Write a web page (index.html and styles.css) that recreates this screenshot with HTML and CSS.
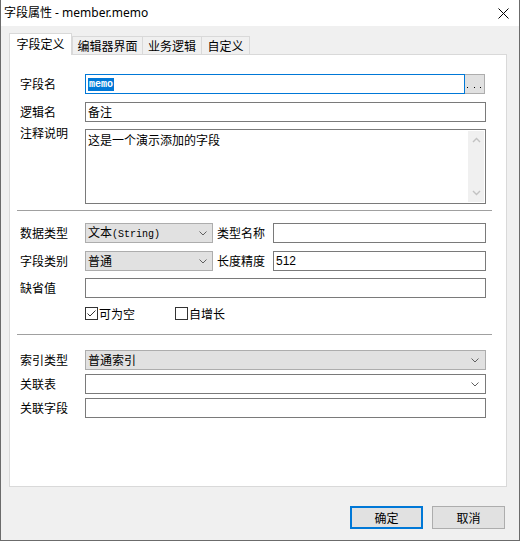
FILE: index.html
```html
<!DOCTYPE html>
<html lang="zh">
<head>
<meta charset="utf-8">
<title>字段属性 - member.memo</title>
<link rel="stylesheet" href="styles.css">
</head>
<body>
<div class="window">
  <div class="titlebar">
    <span class="title">字段属性 - member.memo</span>
    <svg class="close" width="11" height="11" viewBox="0 0 11 11"><path d="M0.5 0.5L10.5 10.5M10.5 0.5L0.5 10.5" stroke="#000" stroke-width="1" fill="none"/></svg>
  </div>
  <div class="main">
    <div class="tabs">
      <div class="tab tab-active tab-1">字段定义</div>
      <div class="tab tab-2">编辑器界面</div>
      <div class="tab tab-3">业务逻辑</div>
      <div class="tab tab-4">自定义</div>
    </div>
    <div class="panel">
      <div class="row">
        <div class="label">字段名</div>
        <div class="field focus"><span class="sel">memo</span></div>
        <div class="dots"><svg width="19" height="20" viewBox="0 0 19 20"><rect x="2" y="12" width="1" height="1" fill="#000"/><rect x="9" y="12" width="1" height="1" fill="#000"/><rect x="15" y="12" width="1" height="1" fill="#000"/></svg></div>
      </div>
      <div class="row gap-8">
        <div class="label">逻辑名</div>
        <div class="field">备注</div>
      </div>
      <div class="row row-top gap-7">
        <div class="label label-top">注释说明</div>
        <div class="field textarea">
          <div class="textarea-text">这是一个演示添加的字段</div>
          <div class="scrollbar">
            <svg width="9" height="6" viewBox="0 0 9 6"><path d="M1 5L4.5 1.5L8 5" fill="none" stroke="#c2c2c2" stroke-width="1.4"/></svg>
            <svg width="9" height="6" viewBox="0 0 9 6"><path d="M1 1L4.5 4.5L8 1" fill="none" stroke="#c2c2c2" stroke-width="1.4"/></svg>
          </div>
        </div>
      </div>
      <div class="sep sep-1"></div>
      <div class="row gap-12">
        <div class="label">数据类型</div>
        <div class="select select-short"><span>文本<span class="mono">(String)</span></span><svg width="8" height="5" viewBox="0 0 8 5"><path d="M0.5 0.5L4 4L7.5 0.5" fill="none" stroke="#606060"/></svg></div>
        <div class="label-mid">类型名称</div>
        <div class="field"></div>
      </div>
      <div class="row gap-8">
        <div class="label">字段类别</div>
        <div class="select select-short"><span>普通</span><svg width="8" height="5" viewBox="0 0 8 5"><path d="M0.5 0.5L4 4L7.5 0.5" fill="none" stroke="#606060"/></svg></div>
        <div class="label-mid">长度精度</div>
        <div class="field"><span class="num">512</span></div>
      </div>
      <div class="row gap-7">
        <div class="label">缺省值</div>
        <div class="field"></div>
      </div>
      <div class="row checks">
        <div class="check check-1">
          <span class="box"><svg width="11" height="11" viewBox="0 0 11 11"><path d="M1.5 5.5L4 8L9.5 2.5" fill="none" stroke="#333" stroke-width="1"/></svg></span>
          <span>可为空</span>
        </div>
        <div class="check">
          <span class="box"></span>
          <span>自增长</span>
        </div>
      </div>
      <div class="sep sep-2"></div>
      <div class="row gap-15">
        <div class="label">索引类型</div>
        <div class="select select-wide"><span>普通索引</span><svg width="8" height="5" viewBox="0 0 8 5"><path d="M0.5 0.5L4 4L7.5 0.5" fill="none" stroke="#606060"/></svg></div>
      </div>
      <div class="row gap-4">
        <div class="label">关联表</div>
        <div class="field combo"><span></span><svg width="8" height="5" viewBox="0 0 8 5"><path d="M0.5 0.5L4 4L7.5 0.5" fill="none" stroke="#606060"/></svg></div>
      </div>
      <div class="row gap-4">
        <div class="label">关联字段</div>
        <div class="field"></div>
      </div>
    </div>
    <div class="buttons">
      <div class="btn btn-default">确定</div>
      <div class="btn">取消</div>
    </div>
  </div>
</div>
</body>
</html>
```
FILE: styles.css
```css
* { box-sizing: border-box; }
html, body { margin: 0; padding: 0; }
body {
  font-family: "Noto Sans CJK SC", "Noto Sans", sans-serif;
  font-size: 12px;
  color: #000;
  background: #f0f0f0;
}
.window {
  width: 520px;
  height: 541px;
  border: 1px solid #6b6b6b;
  border-top: none;
  background: #f0f0f0;
  display: flex;
  flex-direction: column;
}
.titlebar {
  height: 26px;
  flex: none;
  background: #fff;
  display: flex;
  align-items: center;
  justify-content: space-between;
  padding: 0 10px 0 3px;
}
.title {
  font-family: "Noto Sans", "Noto Sans CJK SC", sans-serif;
  line-height: 16px;
}
.close { display: block; }
.main {
  flex: 1;
  padding: 7px 12px 0 8px;
  display: flex;
  flex-direction: column;
}
.tabs {
  display: flex;
  align-items: flex-end;
  height: 21px;
}
.tab {
  height: 18px;
  border: 1px solid #d9d9d9;
  border-bottom: none;
  background: #f0f0f0;
  display: flex;
  align-items: center;
  justify-content: center;
  line-height: 14px;
  flex: none;
}
.tab-active {
  height: 22px;
  background: #fff;
  margin-bottom: -1px;
  padding-bottom: 2px;
  position: relative;
  z-index: 1;
}
.tab-1 { width: 63px; }
.tab-2 { width: 71px; }
.tab-3 { width: 59px; border-left: none; }
.tab-4 { width: 48px; border-left: none; }
.panel {
  height: 433px;
  flex: none;
  background: #fff;
  border: 1px solid #d9d9d9;
  padding: 19px 20px 0 10px;
}
.row {
  display: flex;
  align-items: center;
}
.row-top { align-items: flex-start; }
.gap-4 { margin-top: 4px; }
.gap-7 { margin-top: 7px; }
.gap-8 { margin-top: 8px; }
.gap-12 { margin-top: 12px; }
.gap-15 { margin-top: 15px; }
.label {
  width: 65px;
  flex: none;
  line-height: 14px;
}
.label-top { margin-top: -3px; }
.label-mid {
  width: 60px;
  flex: none;
  padding-left: 4px;
  line-height: 14px;
}
.field {
  flex: 1;
  height: 20px;
  border: 1px solid #7a7a7a;
  background: #fff;
  display: flex;
  align-items: center;
  padding-left: 2px;
  line-height: 14px;
}
.field.focus { border-color: #0078d7; }
.sel {
  background: #0078d7;
  color: #fff;
  font-family: "Liberation Mono", monospace;
  font-size: 10px;
  font-weight: bold;
  line-height: 13px;
  padding: 0 1px;
}
.num { font-family: "Liberation Sans", sans-serif; font-size: 12px; }
.dots {
  width: 20px;
  height: 20px;
  flex: none;
  margin-right: 1px;
  background: #e1e1e1;
  border: 1px solid #adadad;
  border-left: none;
}
.dots svg { display: block; }
.textarea {
  height: 75px;
  align-items: stretch;
  padding: 1px 1px 1px 2px;
}
.textarea-text {
  flex: 1;
  padding-top: 2px;
  line-height: 14px;
}
.scrollbar {
  width: 16px;
  flex: none;
  background: #f0f0f0;
  display: flex;
  flex-direction: column;
  justify-content: space-between;
  align-items: center;
  padding: 6px 0 6px;
}
.scrollbar svg { display: block; }
.sep {
  height: 1px;
  background: #a0a0a0;
  margin-left: -3px;
  margin-right: -6px;
}
.sep-1 { margin-top: 6px; }
.sep-2 { margin-top: 14px; }
.select {
  height: 20px;
  background: #e1e1e1;
  border: 1px solid #adadad;
  display: flex;
  align-items: center;
  justify-content: space-between;
  padding: 0 5px 0 2px;
  line-height: 14px;
  flex: none;
}
.select svg, .combo svg { display: block; flex: none; }
.select-short { width: 128px; }
.select-wide { flex: 1; padding-right: 6px; }
.combo { justify-content: space-between; padding-right: 6px; }
.mono {
  font-family: "Liberation Mono", monospace;
  font-size: 10px;
}
.checks {
  margin-top: 9px;
  padding-left: 65px;
  height: 13px;
}
.check {
  display: flex;
  align-items: center;
  line-height: 14px;
}
.check-1 { width: 90px; }
.box {
  width: 13px;
  height: 13px;
  border: 1px solid #333;
  background: #fff;
  margin-right: 1px;
  display: block;
}
.box svg { display: block; }
.buttons {
  display: flex;
  justify-content: flex-end;
  gap: 9px;
  margin-top: 19px;
  padding-right: 2px;
}
.btn {
  width: 73px;
  height: 23px;
  background: #e1e1e1;
  border: 1px solid #adadad;
  display: flex;
  align-items: center;
  justify-content: center;
  line-height: 14px;
}
.btn-default { border: 2px solid #0078d7; }
```
